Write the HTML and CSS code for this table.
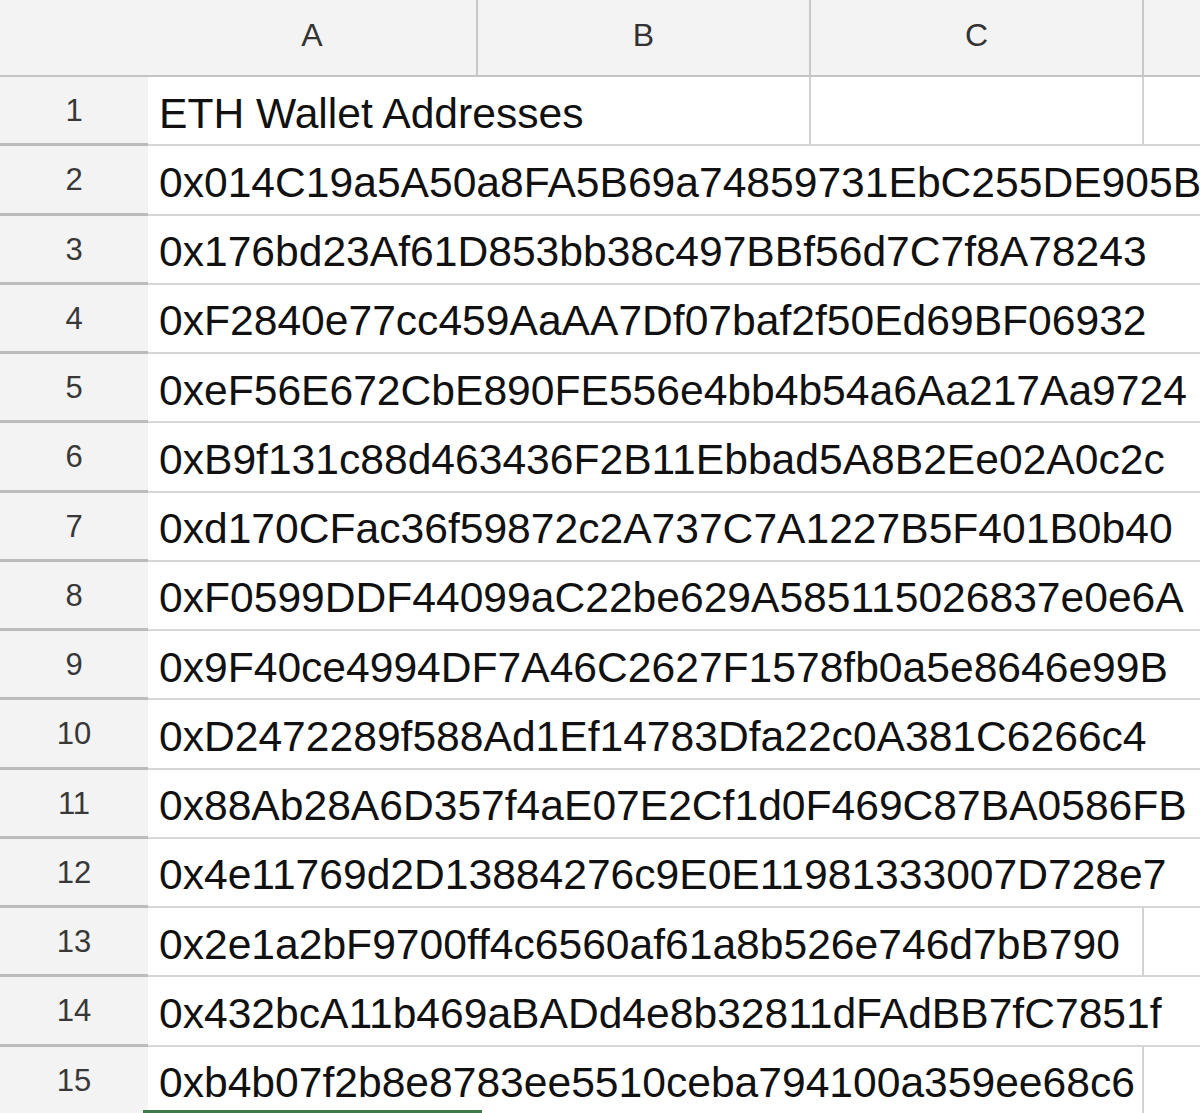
FILE: index.html
```html
<!DOCTYPE html>
<html lang="en">
<head>
    <meta charset="UTF-8">
    <title>ETH Wallet Addresses</title>
    <link rel="stylesheet" href="styles.css">
</head>
<body>

<div class="sheet">
    <!-- column headers -->
    <div class="corner"></div>
    <div class="col-head">A</div>
    <div class="col-head">B</div>
    <div class="col-head">C</div>
    <div class="col-head last"></div>

    <div class="row-head">1</div>
    <div class="cell">ETH Wallet Addresses</div>
    <div class="cell edge"></div>
    <div class="cell edge"></div>
    <div class="cell"></div>

    <div class="row-head">2</div>
    <div class="cell">0x014C19a5A50a8FA5B69a74859731EbC255DE905B</div>
    <div class="cell"></div>
    <div class="cell"></div>
    <div class="cell"></div>

    <div class="row-head">3</div>
    <div class="cell">0x176bd23Af61D853bb38c497BBf56d7C7f8A78243</div>
    <div class="cell"></div>
    <div class="cell"></div>
    <div class="cell"></div>

    <div class="row-head">4</div>
    <div class="cell">0xF2840e77cc459AaAA7Df07baf2f50Ed69BF06932</div>
    <div class="cell"></div>
    <div class="cell"></div>
    <div class="cell"></div>

    <div class="row-head">5</div>
    <div class="cell">0xeF56E672CbE890FE556e4bb4b54a6Aa217Aa9724</div>
    <div class="cell"></div>
    <div class="cell"></div>
    <div class="cell"></div>

    <div class="row-head">6</div>
    <div class="cell">0xB9f131c88d463436F2B11Ebbad5A8B2Ee02A0c2c</div>
    <div class="cell"></div>
    <div class="cell"></div>
    <div class="cell"></div>

    <div class="row-head">7</div>
    <div class="cell">0xd170CFac36f59872c2A737C7A1227B5F401B0b40</div>
    <div class="cell"></div>
    <div class="cell"></div>
    <div class="cell"></div>

    <div class="row-head">8</div>
    <div class="cell">0xF0599DDF44099aC22be629A585115026837e0e6A</div>
    <div class="cell"></div>
    <div class="cell"></div>
    <div class="cell"></div>

    <div class="row-head">9</div>
    <div class="cell">0x9F40ce4994DF7A46C2627F1578fb0a5e8646e99B</div>
    <div class="cell"></div>
    <div class="cell"></div>
    <div class="cell"></div>

    <div class="row-head">10</div>
    <div class="cell">0xD2472289f588Ad1Ef14783Dfa22c0A381C6266c4</div>
    <div class="cell"></div>
    <div class="cell"></div>
    <div class="cell"></div>

    <div class="row-head">11</div>
    <div class="cell">0x88Ab28A6D357f4aE07E2Cf1d0F469C87BA0586FB</div>
    <div class="cell"></div>
    <div class="cell"></div>
    <div class="cell"></div>

    <div class="row-head">12</div>
    <div class="cell">0x4e11769d2D13884276c9E0E11981333007D728e7</div>
    <div class="cell"></div>
    <div class="cell"></div>
    <div class="cell"></div>

    <div class="row-head">13</div>
    <div class="cell">0x2e1a2bF9700ff4c6560af61a8b526e746d7bB790</div>
    <div class="cell"></div>
    <div class="cell edge"></div>
    <div class="cell"></div>

    <div class="row-head">14</div>
    <div class="cell">0x432bcA11b469aBADd4e8b32811dFAdBB7fC7851f</div>
    <div class="cell"></div>
    <div class="cell"></div>
    <div class="cell"></div>

    <div class="row-head">15</div>
    <div class="cell">0xb4b07f2b8e8783ee5510ceba794100a359ee68c6</div>
    <div class="cell"></div>
    <div class="cell edge"></div>
    <div class="cell"></div>

    <!-- row 16, only the selection edge shows -->
    <div class="row-head"></div>
    <div class="cell selected"></div>
    <div class="cell"></div>
    <div class="cell"></div>
    <div class="cell"></div>
</div>

</body>
</html>
```

FILE: styles.css
```css
html, body {
    margin: 0;
    height: 100%;
    overflow: hidden;
    background: #fff;
}

body {
    font-family: "Liberation Sans", Arial, sans-serif;
}

.sheet {
    display: grid;
    grid-template-columns: 148px 330px 333px 333px 1fr;
    grid-template-rows: 77px repeat(16, 69.25px);
}

.sheet > div {
    box-sizing: border-box;
    min-width: 0;
}

.corner, .col-head {
    background: #f3f3f3;
    border-bottom: 2px solid #c4c4c4;
}

.col-head {
    display: flex;
    align-items: center;
    justify-content: center;
    padding-bottom: 4px;
    border-right: 2px solid #c8c8c8;
    font-size: 32px;
    color: #333;
}

.col-head.last {
    border-right: none;
}

.row-head {
    display: flex;
    align-items: center;
    justify-content: center;
    padding-top: 2px;
    background: #f3f3f3;
    border-bottom: 3px solid #bcbcbc;
    font-size: 31px;
    color: #383838;
}

.cell {
    display: flex;
    align-items: center;
    padding: 5px 0 0 11px;
    border-bottom: 2px solid #d6d6d6;
    font-size: 42.6px;
    color: #111;
    white-space: nowrap;
    overflow: visible;
}

.cell.edge {
    border-right: 2px solid #d2d2d2;
}

.cell.selected {
    border-top: 3px solid #3f7a4b;
    margin: -6px -4px 0 -5px;
}
```
